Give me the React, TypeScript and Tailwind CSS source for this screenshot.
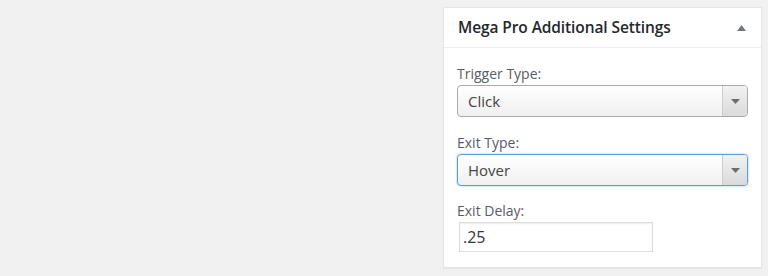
import { useState } from 'react';

function Caret() {
  return (
    <svg width="9" height="5" viewBox="0 0 9 5" className="block">
      <path d="M0 0h9L4.5 5z" fill="#6d6d6d" />
    </svg>
  );
}

function FakeSelect({ value, focused }: { value: string; focused?: boolean }) {
  return (
    <div
      className={`flex h-[32px] w-[291px] overflow-hidden rounded-[4px] border bg-gradient-to-b from-white to-[#f0f0f0] ${
        focused ? 'border-[#5b9dd9] shadow-[0_0_2px_rgba(30,140,190,0.6)]' : 'border-[#aaaaaa]'
      }`}
    >
      <div className="flex flex-1 items-center pl-[10px] text-[15px] text-[#444]">{value}</div>
      <div className="flex w-[25px] items-center justify-center border-l border-[#cccccc] bg-gradient-to-b from-[#f2f2f2] to-[#dadada]">
        <Caret />
      </div>
    </div>
  );
}

export default function App() {
  const [delay, setDelay] = useState('.25');

  return (
    <div className="flex h-[276px] w-[768px] justify-end bg-[#f1f1f1] pr-[6px] pt-[7px] font-['Open_Sans','Noto_Sans',sans-serif]">
      <div className="h-[261px] w-[319px] border border-[#e5e5e5] bg-white shadow-[0_1px_1px_rgba(0,0,0,0.04)]">
        {/* Header */}
        <div className="flex h-[40px] items-center justify-between border-b border-[#eeeeee] pl-[14px] pr-[15px]">
          <h2 className="text-[15.5px] font-semibold tracking-[-0.1px] text-[#23282d]">Mega Pro Additional Settings</h2>
          <svg width="9" height="6" viewBox="0 0 9 6" className="block">
            <path d="M4.5 0L9 6H0z" fill="#72777c" />
          </svg>
        </div>

        {/* Fields */}
        <div className="pl-[13px] pt-[15px]">
          <label className="block text-[14px] leading-[22px] text-[#555d66]">Trigger Type:</label>
          <FakeSelect value="Click" />

          <label className="mt-[15px] block text-[14px] leading-[22px] text-[#555d66]">Exit Type:</label>
          <FakeSelect value="Hover" focused />

          <label className="mt-[14px] block text-[14px] leading-[22px] text-[#555d66]">Exit Delay:</label>
          <input
            value={delay}
            onChange={e => setDelay(e.target.value)}
            className="ml-[2px] block h-[30px] w-[194px] border border-[#dddddd] px-[3px] text-[16px] text-[#32373c] shadow-[inset_0_1px_2px_rgba(0,0,0,0.07)] outline-none"
          />
        </div>
      </div>
    </div>
  );
}
